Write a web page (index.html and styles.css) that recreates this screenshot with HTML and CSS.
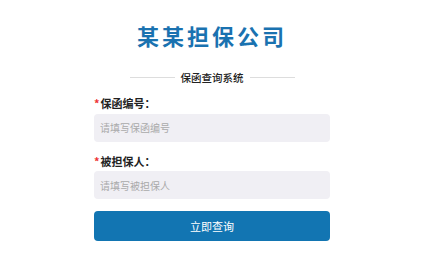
FILE: index.html
```html
<!DOCTYPE html>
<html lang="zh-CN">

<head>
    <meta charset="UTF-8">
    <meta name="viewport" content="width=device-width, initial-scale=1.0">
    <title>保函查询系统</title>
    <link rel="stylesheet" href="styles.css">
</head>

<body>
    <div class="container">
        <h1 class="title">某某担保公司</h1>
        <div class="divider">
            <span class="line"></span>
            <span class="divider-text">保函查询系统</span>
            <span class="line"></span>
        </div>
        <div class="form-item">
            <label class="label"><span class="required">*</span>保函编号：</label>
            <input type="text" class="input" placeholder="请填写保函编号">
        </div>
        <div class="form-item">
            <label class="label"><span class="required">*</span>被担保人：</label>
            <input type="text" class="input" placeholder="请填写被担保人">
        </div>
        <button class="btn">立即查询</button>
    </div>
</body>

</html>
```

FILE: styles.css
```css
* {
    margin: 0;
    padding: 0;
    box-sizing: border-box;
}

body {
    background-color: #fff;
    font-family: "Noto Sans CJK SC", "Noto Sans", sans-serif;
}

.container {
    width: 236px;
    margin: 0 auto;
    padding-top: 19px;
}

.title {
    text-align: center;
    font-size: 22px;
    line-height: 32px;
    font-weight: bold;
    letter-spacing: 3px;
    color: #1a72b0;
}

.divider {
    display: flex;
    align-items: center;
    justify-content: center;
    margin-top: 18px;
    height: 16px;
}

.divider .line {
    width: 45px;
    height: 1px;
    background-color: #ddd;
}

.divider-text {
    margin: 0 6px;
    font-size: 10.5px;
    font-weight: 500;
    color: #222;
}

.form-item {
    margin-top: 10px;
}

.form-item + .form-item {
    margin-top: 11px;
}

.label {
    display: block;
    font-size: 11px;
    font-weight: bold;
    color: #222;
    line-height: 16px;
    margin-bottom: 2px;
}

.required {
    color: #e33;
    margin-right: 1px;
}

.input {
    width: 100%;
    height: 28px;
    padding: 0 6px;
    font-size: 10px;
    font-family: inherit;
    background-color: #f0eff4;
    border: none;
    border-radius: 4px;
    outline: none;
}

.input::placeholder {
    color: #aaa;
}

.btn {
    display: block;
    width: 100%;
    height: 30px;
    margin-top: 12px;
    font-size: 11px;
    font-family: inherit;
    color: #fff;
    background-color: #1275b2;
    border: none;
    border-radius: 4px;
    cursor: pointer;
}
```
